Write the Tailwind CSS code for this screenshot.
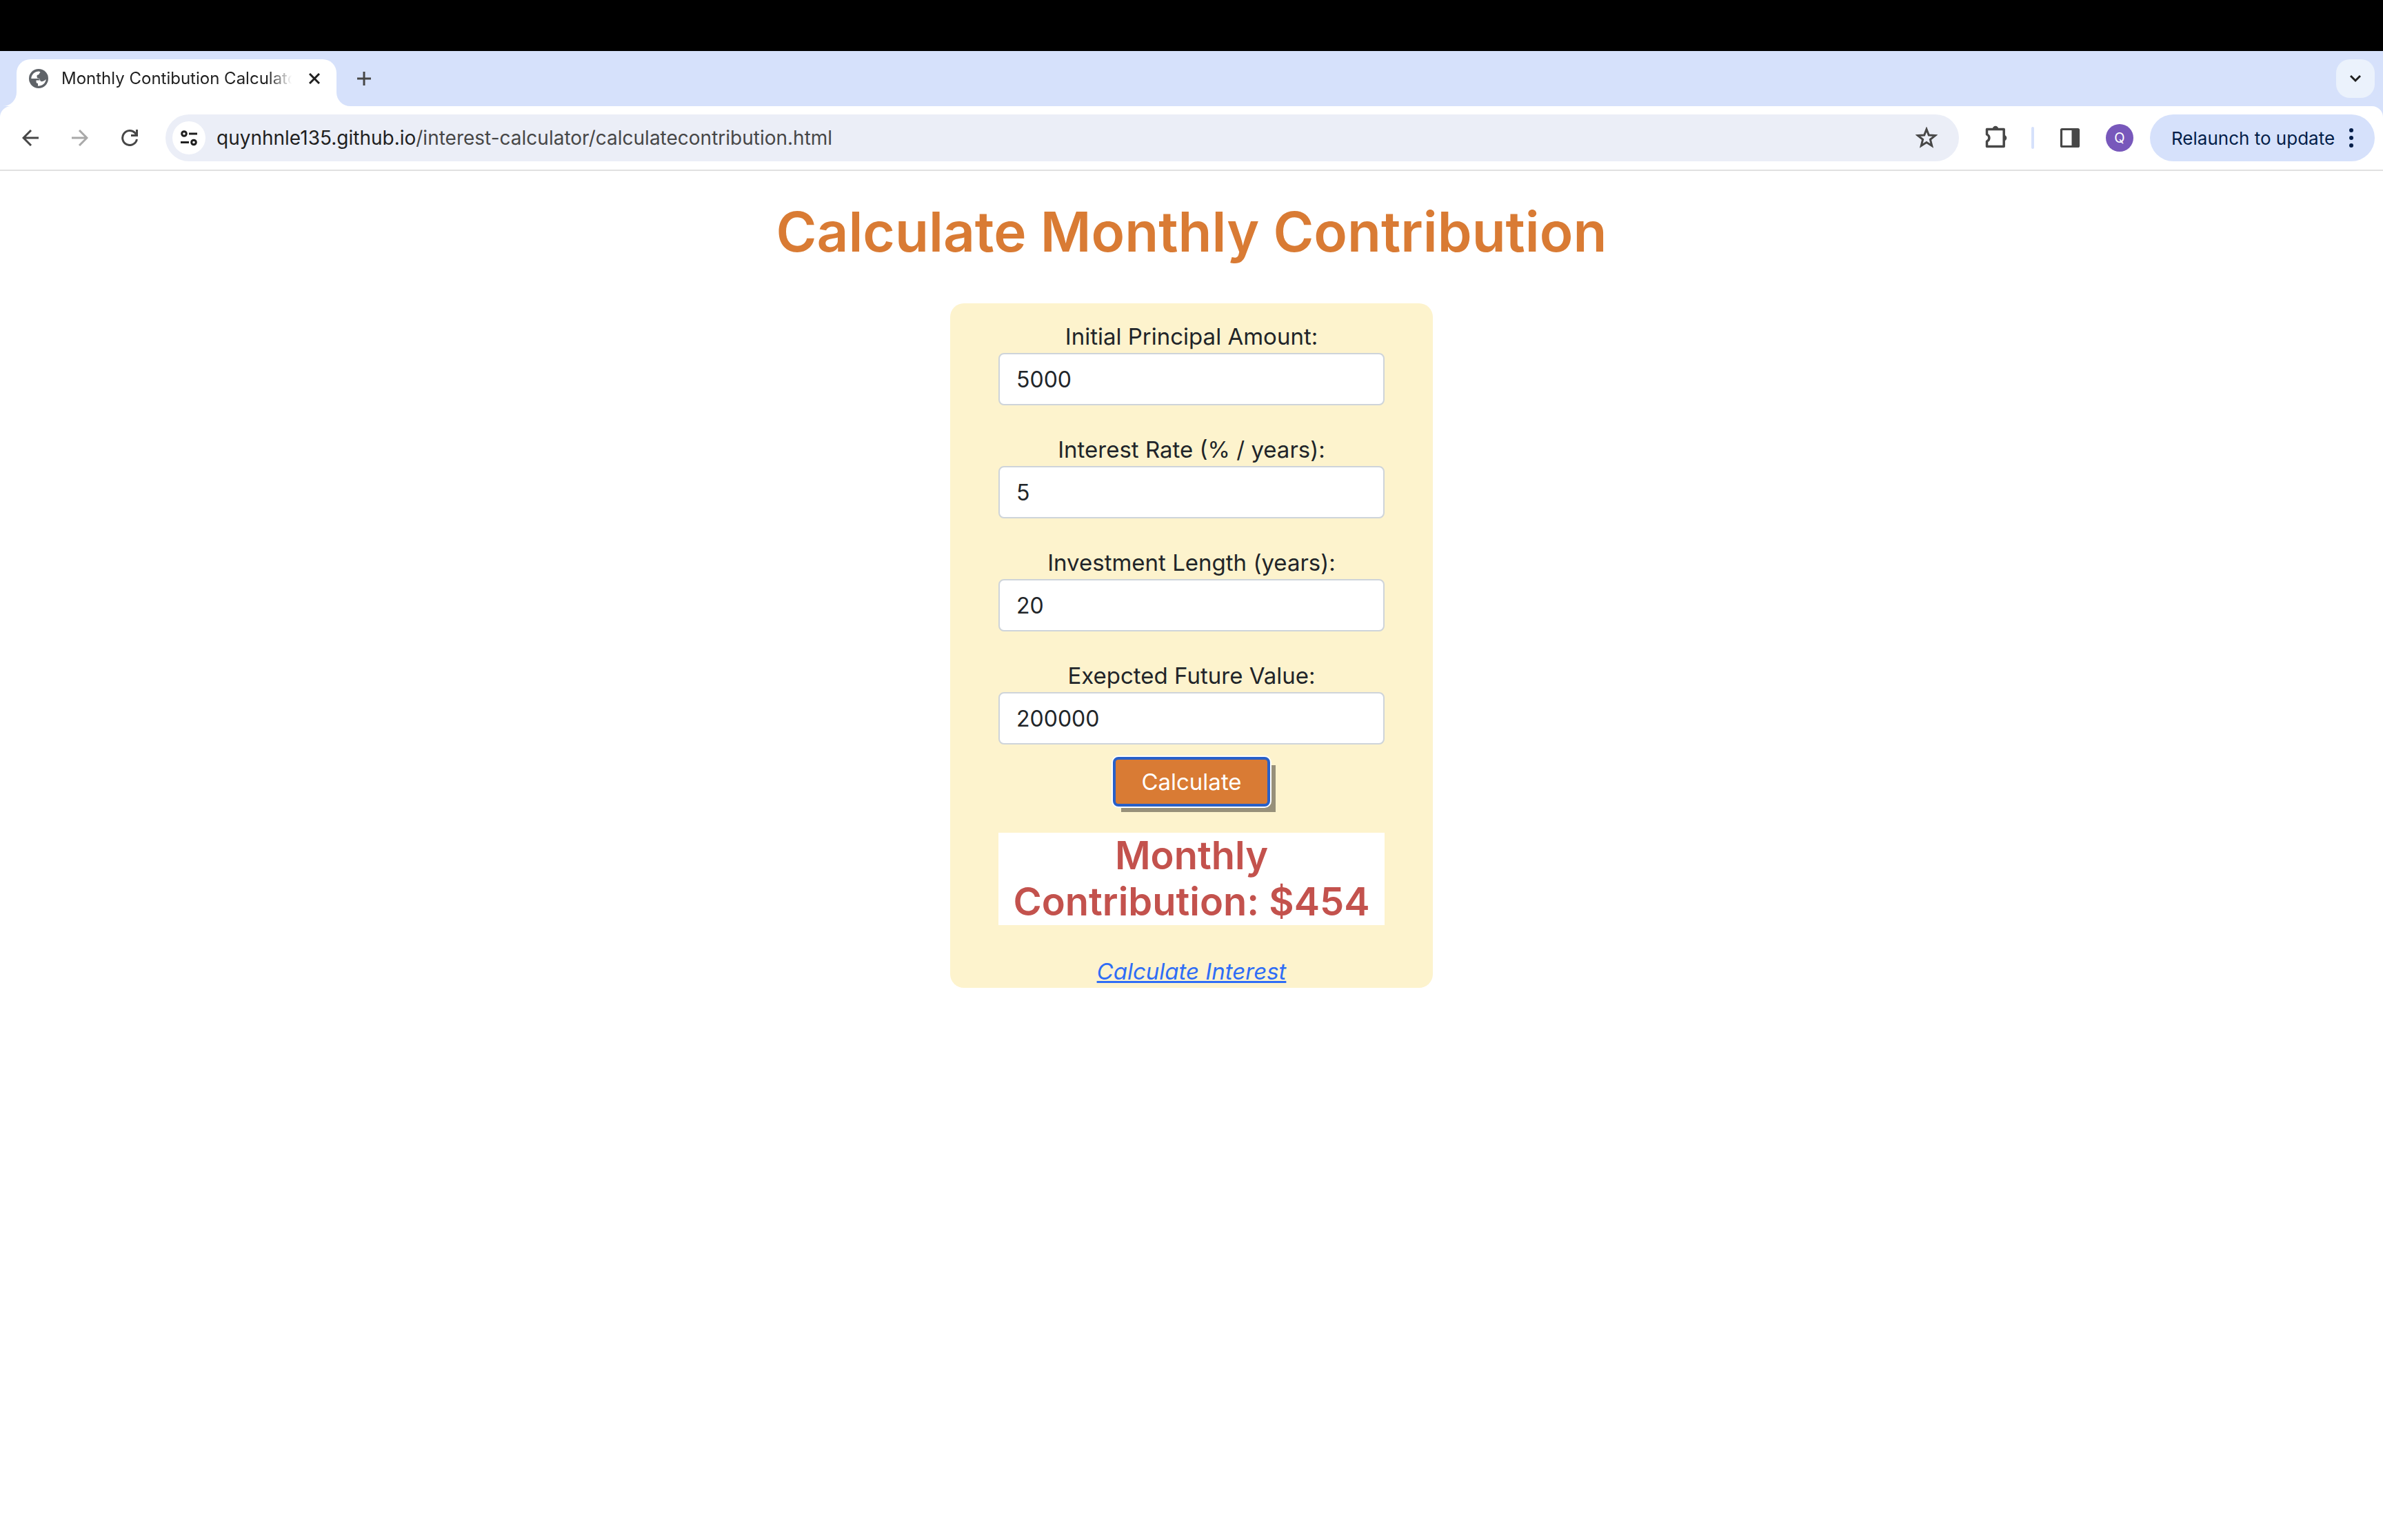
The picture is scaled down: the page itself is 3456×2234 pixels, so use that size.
<!DOCTYPE html>
<html lang="en">
<head>
<meta charset="utf-8">
<meta name="viewport" content="width=device-width, initial-scale=1">
<title>Monthly Contibution Calculator</title>
<script src="https://cdn.jsdelivr.net/npm/@tailwindcss/browser@4"></script>
</head>
<body class="min-h-screen bg-white font-['Inter',sans-serif] text-[#212529]">
<div class="h-[74px] bg-black"></div>

<header class="bg-[#d6e1fb]">
  <!-- Tab strip -->
  <div class="flex h-20 items-end pr-3 pl-6">
    <div class="relative flex h-[68px] w-[464px] items-center rounded-t-[20px] bg-white pb-3 pl-[18px]">
      <svg class="absolute bottom-0 -left-5 size-5" viewBox="0 0 20 20" fill="#fff" aria-hidden="true"><path d="M20 0v20H0A20 20 0 0 0 20 0z"/></svg>
      <svg class="absolute -right-5 bottom-0 size-5" viewBox="0 0 20 20" fill="#fff" aria-hidden="true"><path d="M0 0v20h20A20 20 0 0 1 0 0z"/></svg>
      <svg class="size-7 shrink-0" viewBox="0 0 28 28" aria-hidden="true"><circle cx="14" cy="14" r="14" fill="#5f6368"/><path fill="#fff" d="M3.300 14C3.300 8 8.500 3.300 15 3.400L16.500 5 15 6.500Q15 8.500 13 8.500Q11.500 8.500 11.500 10V11Q11.500 13.500 13 13.500Q16 13.500 16 16Q16.500 18.500 19 18.300Q22 18 24.700 15C24 21 19.500 24.700 13 24.700V21Q10.500 21 10.500 18.500V16.500H15.500V15Q14 13.500 11.500 14z"/></svg>
      <span class="ml-[19px] w-[334px] overflow-hidden mask-r-from-90% mask-r-to-100% text-[24px] leading-8 whitespace-nowrap text-[#1f1f1f]">Monthly Contibution Calculator</span>
      <button class="ml-[17px] flex size-8 items-center justify-center" aria-label="Close tab"><svg class="size-4" viewBox="0 0 16 16" fill="none" stroke="#1f1f1f" stroke-width="3"><path d="M1 1l14 14M15 1L1 15"/></svg></button>
    </div>
    <button class="mb-5 ml-5 flex size-10 items-center justify-center" aria-label="New tab"><svg class="size-5" viewBox="0 0 20 20" fill="none" stroke="#474747" stroke-width="3"><path d="M10 0v20M0 10h20"/></svg></button>
    <button class="mb-3 ml-auto flex size-14 items-center justify-center rounded-[20px] bg-[#ebf2fc]" aria-label="Search tabs"><svg class="h-3 w-4" viewBox="0 0 16 12" fill="none" stroke="#1f1f1f" stroke-width="3"><path d="M1 2l7 7 7-7"/></svg></button>
  </div>

  <!-- Toolbar -->
  <div class="flex h-[94px] items-start rounded-t-[16px] border-b-2 border-[#e0e0e0] bg-white pt-3 pr-3 pl-5">
    <nav class="flex h-[68px] w-[220px] shrink-0 items-center gap-6" aria-label="Browser navigation">
      <button class="flex size-12 items-center justify-center" aria-label="Back"><svg class="size-6" viewBox="0 0 24 24" fill="none" stroke="#474747" stroke-width="3"><path d="M24 12H2M13 1L2 12l11 11"/></svg></button>
      <button class="flex size-12 items-center justify-center" aria-label="Forward"><svg class="size-6" viewBox="0 0 24 24" fill="none" stroke="#a9a9a9" stroke-width="3"><path d="M0 12h22M11 1l11 11-11 11"/></svg></button>
      <button class="flex size-12 items-center justify-center" aria-label="Reload"><svg class="size-6" viewBox="0 0 24 24" fill="none" stroke="#474747" stroke-width="3"><path d="M22.500 14A10.500 10.500 0 1 1 20 5l2 2.500"/><path d="M22.500 0v8.500H14"/></svg></button>
    </nav>
    <div class="flex h-[68px] min-w-0 grow items-center rounded-full bg-[#ebeef7] pr-[31px] pl-[10px]">
      <button class="flex size-12 shrink-0 items-center justify-center rounded-full bg-white" aria-label="View site information"><svg class="size-6" viewBox="0 0 24 24" fill="none" stroke="#1f1f1f" stroke-width="3"><circle cx="5" cy="6" r="3.300"/><path d="M12 6h12"/><circle cx="19" cy="18.500" r="3.300"/><path d="M0 18.500h12"/></svg></button>
      <a href="https://quynhnle135.github.io/interest-calculator/calculatecontribution.html" class="ml-4 grow text-[28px] leading-10 whitespace-nowrap text-[#474747]"><span class="text-[#1f1f1f]">quynhnle135.github.io</span>/interest-calculator/calculatecontribution.html</a>
      <button aria-label="Bookmark this tab"><svg class="size-8" viewBox="0 0 32 32" fill="none" stroke="#474747" stroke-width="3"><path d="M16 3.500l3.300 8.500 9.200.6-7.100 5.800 2.300 9L16 22.500l-7.700 4.900 2.300-9L3.500 12.600l9.200-.6z"/></svg></button>
    </div>
    <div class="flex h-[68px] shrink-0 items-center">
      <button class="ml-9" aria-label="Extensions"><svg class="size-9" viewBox="0 0 36 36" fill="none" stroke="#474747" stroke-width="3.500" stroke-linejoin="round"><path d="M4.500 5.500h24.700v25H4.500v-7.500c4.500-2 4.500-8 0-10z"/><path fill="#474747" stroke="none" d="M12.800 5a4.200 4.200 0 0 1 8.400 0zM29 13.800a4.300 4.300 0 0 1 0 8.600z"/></svg></button>
      <span class="ml-[33px] h-8 w-1 rounded-full bg-[#d6e1fb]"></span>
      <button class="ml-[37px]" aria-label="Side panel"><svg class="h-[30px] w-[30px]" viewBox="0 0 30 30"><rect x="2.500" y="2.500" width="25" height="25" rx="1" fill="none" stroke="#474747" stroke-width="3.200"/><path fill="#474747" d="M17.500 2h10v26h-10z"/></svg></button>
      <button class="ml-[37px] flex size-10 items-center justify-center rounded-full bg-[#7858bb] text-xl text-white" aria-label="Profile Q">Q</button>
      <button class="ml-6 flex h-[68px] w-[326px] items-center justify-between rounded-full bg-[#d6e1fb] pr-[30px] pl-[31px] text-[26px] whitespace-nowrap text-[#041e49]">Relaunch to update<svg class="h-7 w-2" viewBox="0 0 8 28" fill="#041e49"><circle cx="4" cy="3" r="3"/><circle cx="4" cy="14" r="3"/><circle cx="4" cy="25" r="3"/></svg></button>
    </div>
  </div>
</header>

<main class="px-6 pt-10 text-center">
  <h1 class="mb-14 text-[80px] leading-[96px] font-semibold text-[#d97b34]">Calculate Monthly Contribution</h1>
  <form class="mx-auto w-full max-w-[700px] rounded-[20px] bg-[#fdf3cd] px-[70px] pt-6 text-[33px] leading-[48px]" onsubmit="return false">
    <div class="flex flex-col gap-10">
      <div>
        <label class="block" for="principal">Initial Principal Amount:</label>
        <input class="block h-[76px] w-full rounded-lg border-2 border-[#ced4da] bg-white px-6 text-[32px]" id="principal" type="text" value="5000">
      </div>
      <div>
        <label class="block" for="rate">Interest Rate (% / years):</label>
        <input class="block h-[76px] w-full rounded-lg border-2 border-[#ced4da] bg-white px-6 text-[32px]" id="rate" type="text" value="5">
      </div>
      <div>
        <label class="block" for="years">Investment Length (years):</label>
        <input class="block h-[76px] w-full rounded-lg border-2 border-[#ced4da] bg-white px-6 text-[32px]" id="years" type="text" value="20">
      </div>
      <div>
        <label class="block" for="future">Exepcted Future Value:</label>
        <input class="block h-[76px] w-full rounded-lg border-2 border-[#ced4da] bg-white px-6 text-[32px]" id="future" type="text" value="200000">
      </div>
    </div>
    <button class="relative mx-auto mt-5 block h-[68px] w-56 text-white shadow-[10px_10px_0_#97907a]"><span class="absolute -inset-0.5 flex items-center justify-center rounded-lg border-4 border-[#2860c8] bg-[#d97b34] ring-2 ring-white">Calculate</span></button>
    <h2 class="mt-10 bg-white text-[56px] leading-[67px] font-semibold text-[#c3524d]">Monthly Contribution: $454</h2>
    <p class="mt-[43px]"><a class="text-[#2f6df6] italic underline decoration-3" href="index.html">Calculate Interest</a></p>
  </form>
</main>
</body>
</html>
